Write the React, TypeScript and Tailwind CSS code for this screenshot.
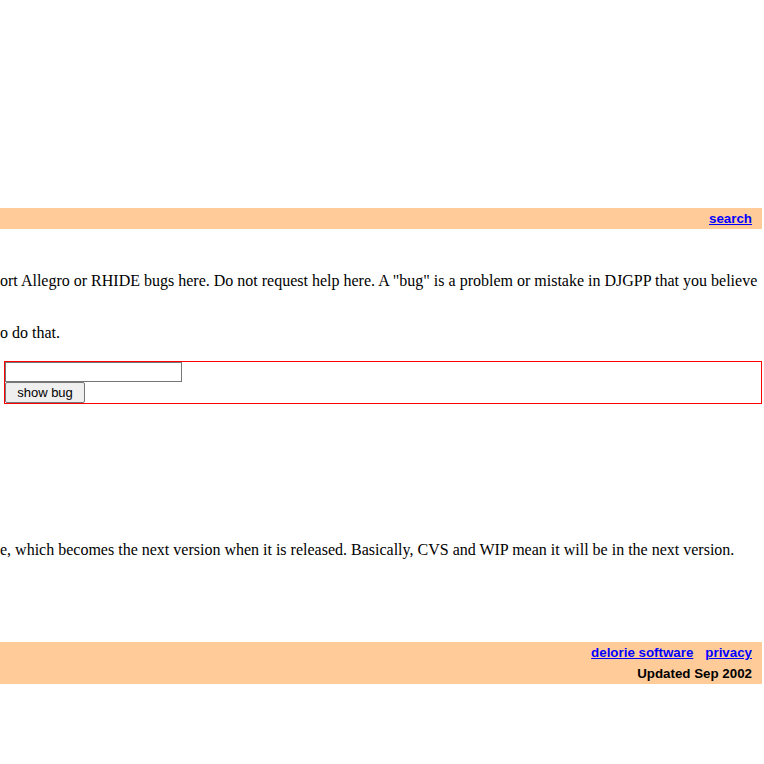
import React from "react";

export default function App() {
  const serif = { fontFamily: '"Liberation Serif", "Times New Roman", serif' };
  const sans = { fontFamily: '"Liberation Sans", Arial, sans-serif' };
  return (
    <div className="w-[764px] h-[764px] bg-white overflow-hidden flex flex-col" style={serif}>
      <div className="h-[208px] shrink-0" />
      <div
        className="h-[21px] w-[762px] shrink-0 bg-[#ffcc99] flex items-center justify-end pr-[10px]"
        style={sans}
      >
        <a href="#" className="text-[13.33px] font-bold text-[#0000ff] underline leading-none">
          search
        </a>
      </div>

      <p className="mt-[43px] text-[16px] leading-[18px] text-black whitespace-nowrap">
        ort Allegro or RHIDE bugs here. Do not request help here. A "bug" is a problem or mistake in DJGPP that you believe
      </p>
      <p className="mt-[34px] text-[16px] leading-[18px] text-black whitespace-nowrap">o do that.</p>

      <div className="mt-[19px] ml-[4px] w-[758px] h-[43px] bg-[#ff0000] p-px">
        <form className="w-full h-full bg-white flex flex-col items-start" style={sans}>
          <input
            type="text"
            className="w-[177px] h-[20px] border border-[#767676] bg-white"
          />
          <button
            type="button"
            className="h-[21px] w-[80px] border border-[#767676] rounded-[2px] bg-[#efefef] text-[13px] text-black leading-none"
          >
            show bug
          </button>
        </form>
      </div>

      <p className="mt-[137px] text-[16px] leading-[18px] text-black whitespace-nowrap">
        e, which becomes the next version when it is released. Basically, CVS and WIP mean it will be in the next version.
      </p>

      <div
        className="mt-[83px] h-[42px] w-[762px] shrink-0 bg-[#ffcc99] flex flex-col items-end justify-center pr-[10px] gap-[7px]"
        style={sans}
      >
        <div className="flex gap-[12px] text-[13.33px] font-bold leading-none">
          <a href="#" className="text-[#0000ff] underline">delorie software</a>
          <a href="#" className="text-[#0000ff] underline">privacy</a>
        </div>
        <div className="text-[13.33px] font-bold text-black leading-none">Updated Sep 2002</div>
      </div>
    </div>
  );
}
